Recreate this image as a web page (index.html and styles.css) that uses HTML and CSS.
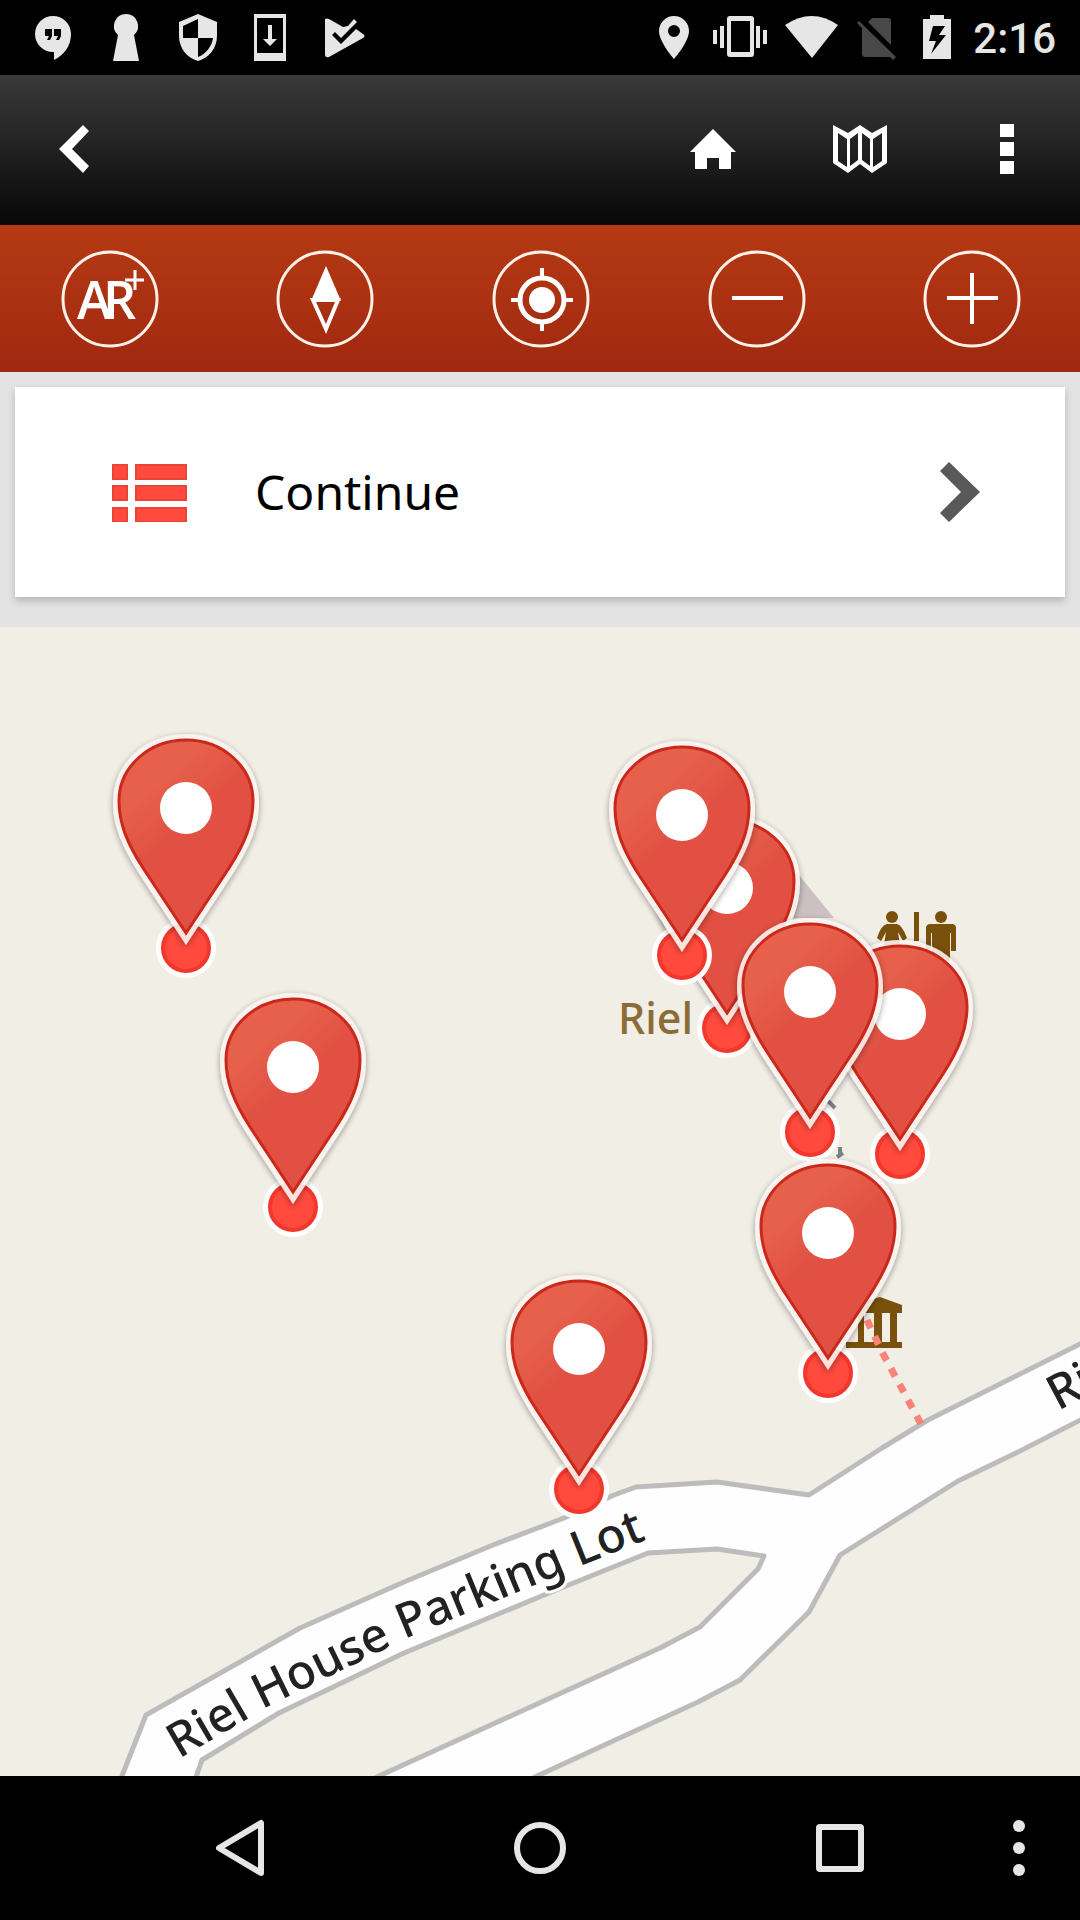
FILE: index.html
```html
<!DOCTYPE html>
<html lang="en">
<head>
<meta charset="utf-8">
<meta name="viewport" content="width=device-width, initial-scale=1">
<title>Map</title>
<link rel="stylesheet" href="styles.css">
</head>
<body>
<div class="screen">
  <div class="status">
    <div class="status-left">
      <svg class="notice" viewBox="0 0 72 75"><path fill-rule="evenodd" d="M35 16a18 18 0 0 1 18 18c0 12-7 21-17 26v-8h-1a18 18 0 0 1 0-36zM27 29v7h4l-2 4h3l2-4v-7zm9 0v7h4l-2 4h3l2-4v-7z"/></svg>
      <svg class="notice" viewBox="0 0 72 75"><path d="M36 14a12 12 0 0 1 8 21l5 26H23l5-26a12 12 0 0 1 8-21z"/></svg>
      <svg class="notice" viewBox="0 0 72 75"><path fill-rule="evenodd" d="M36 14l19 8v14c0 12-8 22-19 25-11-3-19-13-19-25V22zM36 19l-15 7v12h15zM36 38v19c8-3 14-11 15-19z"/></svg>
      <svg class="notice" viewBox="0 0 72 75"><path fill-rule="evenodd" d="M20 14h32v47H20zM23 18v35h26V18zM34 25h4v14h5l-7 7-7-7h5z"/></svg>
      <svg class="notice" viewBox="0 0 72 75"><path d="M19 19q2-1 4 0l14 8 5-1 6-7 3 3-16 16-6-6-3 3 9 9 15-15 7 5q3 2 0 4L23 57q-4 1-4-3z"/></svg>
    </div>
    <div class="status-right">
      <svg width="36" height="75" viewBox="0 0 36 75"><path fill-rule="evenodd" d="M15 16a15 15 0 0 1 15 15c0 11-15 28-15 28S0 42 0 31a15 15 0 0 1 15-15zM15 25a6 6 0 1 0 0 12 6 6 0 0 0 0-12z"/></svg>
      <svg width="54" height="75" viewBox="0 0 54 75"><path fill-rule="evenodd" d="M17 16h21q3 0 3 3v35q0 3-3 3H17q-3 0-3-3V19q0-3 3-3zM18 21v31h19V21zM0 30h4v14H0zM7 26h4v22H7zM43 26h4v22h-4zM50 30h4v14h-4z"/></svg>
      <svg width="54" height="75" viewBox="0 0 54 75"><path d="M0 25q27-18 53 0L27 58z"/></svg>
      <svg class="no-sim" width="46" height="75" viewBox="0 0 46 75"><path d="M11 22l4-4h16q3 0 3 3v24zM5 25l30 30q-1 2-3 2H8q-3 0-3-3zM0 23l2-2 37 36-3 3z"/></svg>
      <svg width="34" height="75" viewBox="0 0 34 75"><path fill-rule="evenodd" d="M9 15h14v4h7v40H2V19h7zM12 26l-4 15h7l-5 13 15-19h-7l6-9z"/></svg>
      <time class="clock">2:16</time>
    </div>
  </div>

  <header class="header">
    <button class="header-button" type="button" aria-label="Back"><svg width="30" height="48" viewBox="0 0 30 48"><path d="M24 0l6 6-17 18 17 17-6 7L0 24z"/></svg></button>
    <div class="header-actions">
      <button class="header-button" type="button" aria-label="Home"><svg width="46" height="40" viewBox="0 0 46 40"><path d="M23 0l23 23h-5v17H29V29H17v11H5V23H0z"/></svg></button>
      <button class="header-button" type="button" aria-label="Map"><svg width="54" height="50" viewBox="0 0 54 50"><path fill-rule="evenodd" d="M0 1l15 8L27 1l12 8 15-8v38L39 49l-12-9-12 9L0 39zM5 9v28l9 6V15zM17 15v27l8-6V9zM29 9v27l8 6V15zM40 15v28l9-6V9z"/></svg></button>
      <button class="header-button" type="button" aria-label="More options"><svg width="14" height="50" viewBox="0 0 14 50"><path d="M0 0h14v13H0zM0 18h14v14H0zM0 37h14v13H0z"/></svg></button>
    </div>
  </header>

  <nav class="toolbar" aria-label="Map tools">
    <button class="tool" type="button" aria-label="Augmented reality"><svg viewBox="0 0 98 98"><circle cx="49" cy="49" r="47"/><text class="ar" x="16 42" y="69">AR</text><path class="plus" d="M74 20v20M64 30h19"/></svg></button>
    <button class="tool" type="button" aria-label="Compass"><svg viewBox="0 0 98 98"><circle cx="49" cy="49" r="47"/><path d="M37 50l13 29 12-29z"/><path class="solid" d="M50 16l15 35H35z"/></svg></button>
    <button class="tool" type="button" aria-label="My location"><svg viewBox="0 0 98 98"><circle cx="49" cy="49" r="47"/><circle class="ring" cx="50" cy="50" r="22"/><circle class="solid" cx="50" cy="50" r="13"/><path d="M50 18v9M50 73v8M19 50h9M72 50h9"/></svg></button>
    <button class="tool" type="button" aria-label="Zoom out"><svg viewBox="0 0 98 98"><circle cx="49" cy="49" r="47"/><path d="M24 48h51"/></svg></button>
    <button class="tool" type="button" aria-label="Zoom in"><svg viewBox="0 0 98 98"><circle cx="49" cy="49" r="47"/><path d="M24 48h51M49 23v51"/></svg></button>
  </nav>

  <main class="main">
    <div class="panel">
      <button class="card" type="button">
        <svg class="list-icon" viewBox="0 0 76 60"><path d="M1 3h14v14H1zM24 3h50v14H24zM1 24h14v14H1zM24 24h50v14H24zM1 46h14v14H1zM24 46h50v14H24z"/></svg>
        <span class="card-label">Continue</span>
        <svg class="chevron" viewBox="0 0 40 60"><path d="M9 0l31 30L9 60l-9-9 21-21L0 9z"/></svg>
      </button>
    </div>

    <svg class="map" viewBox="0 627 1080 1149" preserveAspectRatio="xMidYMid slice" role="group" aria-label="Map of Riel House">
      <defs>
        <linearGradient id="pin-fill" x1="0" y1="0" x2="0.6" y2="1">
          <stop offset="0.3" stop-color="#e6604b"/><stop offset="0.55" stop-color="#e15042"/>
        </linearGradient>
        <filter id="pin-shadow" x="-20%" y="-20%" width="140%" height="140%"><feDropShadow dx="0" dy="2" stdDeviation="3" flood-color="#000" flood-opacity="0.4"/></filter>
        <g id="pin">
          <circle r="30" fill="#fff"/>
          <circle r="23" fill="#ff4a3d" stroke="#f2382c" stroke-width="4"/>
          <path d="M0-3L-48-76C-64-102-73-122-73-145C-73-185-41-214 0-214S73-185 73-145C73-122 64-102 48-76Z" fill="#faf3ef" opacity="0.9" filter="url(#pin-shadow)"/>
          <path d="M0-15L-43-80C-59-105-67-125-67-147C-67-181-37-208 0-208S67-181 67-147C67-125 59-105 43-80Z" fill="url(#pin-fill)" stroke="#c9281b" stroke-width="3"/>
          <circle cy="-140" r="26" fill="#fff"/>
        </g>
        <path id="lot-line" d="M179 1759L273 1704L412 1636L578 1567L690 1522"/>
      </defs>
      <path class="road" d="M114 1800L122 1776L146 1715L300 1628L404 1582L493 1545L564 1518L614 1495L636 1487L717 1482L809 1495L882 1448L928 1420L1100 1334V1410L1016 1453L958 1481L840 1555L809 1612L740 1680L698 1702L537 1776L490 1800Z"/>
      <path class="land" d="M188 1800L202 1760L279 1713L404 1653L561 1588L648 1553L717 1549L764 1556L758 1569L700 1627L660 1648L379 1776L330 1800Z"/>
      <path class="building" d="M795 870L834 918H790Z"/>
      <g class="poi">
        <circle cx="892" cy="917" r="6"/><path d="M887 924h10q5 1 10 14l-4 3-5-9 3 20h-18l3-20-5 9-4-3q4-13 10-14z"/>
        <path d="M914 912h5v29h-5z"/>
        <circle cx="941" cy="917" r="6"/><path d="M929 924h24q3 1 3 4v23h-5v-18h-1v28h-18v-28h-1v18h-5v-23q0-3 3-4z"/>
        <path d="M852 1305l28-8 22 8v8h-50zM858 1313h6v29h-6zM874 1313h8v29h-8zM890 1313h7v29h-7zM846 1342h56v6h-56z"/>
      </g>
      <path class="path" d="M867 1320L881 1350L921 1424"/>
      <path class="scrap" d="M828 1101l7 7M840 1147v9M837 1157l6-4"/>
      <text class="place" x="618" y="1034">Riel</text>
      <text class="street"><textPath href="#lot-line">Riel House Parking Lot</textPath></text>
      <text class="street" transform="translate(1058 1411) rotate(-28)">Ri</text>
      <a href="#stop-1" aria-label="Stop 1"><use href="#pin" x="186" y="948"/></a>
      <a href="#stop-2" aria-label="Stop 2"><use href="#pin" x="293" y="1207"/></a>
      <a href="#stop-3" aria-label="Stop 3"><use href="#pin" x="727" y="1028"/></a>
      <a href="#stop-4" aria-label="Stop 4"><use href="#pin" x="682" y="955"/></a>
      <a href="#stop-5" aria-label="Stop 5"><use href="#pin" x="900" y="1154"/></a>
      <a href="#stop-6" aria-label="Stop 6"><use href="#pin" x="810" y="1132"/></a>
      <a href="#stop-7" aria-label="Stop 7"><use href="#pin" x="828" y="1373"/></a>
      <a href="#stop-8" aria-label="Stop 8"><use href="#pin" x="579" y="1489"/></a>
    </svg>
  </main>

  <nav class="system" aria-label="System">
    <button type="button" aria-label="Back"><svg width="56" height="60" viewBox="0 0 56 60"><path d="M49 5v50L7 30z"/></svg></button>
    <button type="button" aria-label="Home"><svg width="60" height="60" viewBox="0 0 60 60"><circle cx="30" cy="30" r="23"/></svg></button>
    <button type="button" aria-label="Recent apps"><svg width="60" height="60" viewBox="0 0 60 60"><rect x="9" y="9" width="42" height="42" rx="1"/></svg></button>
    <button class="system-more" type="button" aria-label="Menu"><svg class="dots" width="12" height="60" viewBox="0 0 12 60"><circle cx="6" cy="8" r="6"/><circle cx="6" cy="30" r="6"/><circle cx="6" cy="52" r="6"/></svg></button>
  </nav>
</div>
</body>
</html>
```
FILE: styles.css
```css
* { box-sizing: border-box; }
body { margin: 0; background: #000; font-family: "Noto Sans", "Open Sans", sans-serif; }
button { margin: 0; padding: 0; border: 0; background: none; color: inherit; font: inherit; cursor: pointer; }
svg { display: block; flex: none; }

.screen { display: flex; flex-direction: column; min-height: 100vh; }

.status { display: flex; justify-content: space-between; height: 75px; padding: 0 24px 0 18px; background: #000; color: #e6e6e6; }
.status svg { fill: currentColor; }
.status-left { display: flex; }
.notice { width: 72px; height: 75px; }
.status-right { display: flex; gap: 18px; }
.status-right .no-sim { fill: #484848; }
.clock { font: 500 42px/78px Roboto, sans-serif; }

.header { display: flex; justify-content: space-between; height: 150px; padding-bottom: 2px; background: linear-gradient(#3a3a3a, #070707); }
.header-actions { display: flex; }
.header-button { display: flex; align-items: center; justify-content: center; width: 147px; height: 148px; }
.header-button svg { fill: #fff; }

.toolbar { display: grid; grid-template-columns: repeat(5, 1fr); height: 147px; padding-left: 2px; background: linear-gradient(#b53a14, #a0280f); }
.tool { display: flex; align-items: center; justify-content: center; }
.tool svg { width: 98px; height: 98px; fill: none; stroke: #fff; stroke-width: 4; }
.tool circle { stroke: #fff0e8; stroke-width: 3; }
.tool .ring { stroke: #fff; stroke-width: 5; }
.tool .solid { fill: #fff; stroke: none; }
.tool .plus { stroke-width: 3; }
.tool .ar { fill: #fff; stroke: none; font: 600 52px "Open Sans", sans-serif; }

.main { display: flex; flex: 1; flex-direction: column; }
.panel { padding: 15px 15px 30px; background: #e3e3e3; }
.card { display: flex; align-items: center; width: 100%; height: 210px; padding: 0 85px 0 97px; background: #fff; color: #000; text-align: left; box-shadow: 0 4px 8px rgba(0, 0, 0, 0.2); }
.list-icon { width: 76px; height: 60px; fill: #ff4a3d; stroke: #e8443a; stroke-width: 2; }
.card-label { flex: 1; padding-left: 67px; font-size: 48px; line-height: 64px; }
.chevron { width: 40px; height: 60px; fill: #595959; }

.map { flex: 1 1 0; width: 100%; min-height: 600px; background: #f1eee6; }
.road { fill: #fefefe; stroke: #bcbcbc; stroke-width: 5; stroke-linejoin: round; }
.land { fill: #f1eee6; stroke: #bcbcbc; stroke-width: 5; stroke-linejoin: round; }
.building { fill: #cbc1c0; }
.path { fill: none; stroke: #fa8278; stroke-width: 7; stroke-dasharray: 9 9; }
.poi { fill: #7a510c; }
.scrap { fill: none; stroke: #7a8088; stroke-width: 4; }
.place { fill: #8b6c36; font-size: 43px; font-weight: 500; }
.street { fill: #222; stroke: #fff; stroke-width: 6; paint-order: stroke; font-size: 48px; font-weight: 500; }

.system { display: grid; grid-template-columns: 1fr 1fr 1fr 90px; height: 144px; padding-left: 90px; background: #000; }
.system button { display: flex; align-items: center; justify-content: center; }
.system svg { fill: none; stroke: #e6e6e6; stroke-width: 6; stroke-linejoin: round; }
.system .dots { fill: #e6e6e6; stroke: none; }
.system .system-more { width: 58px; }
```
